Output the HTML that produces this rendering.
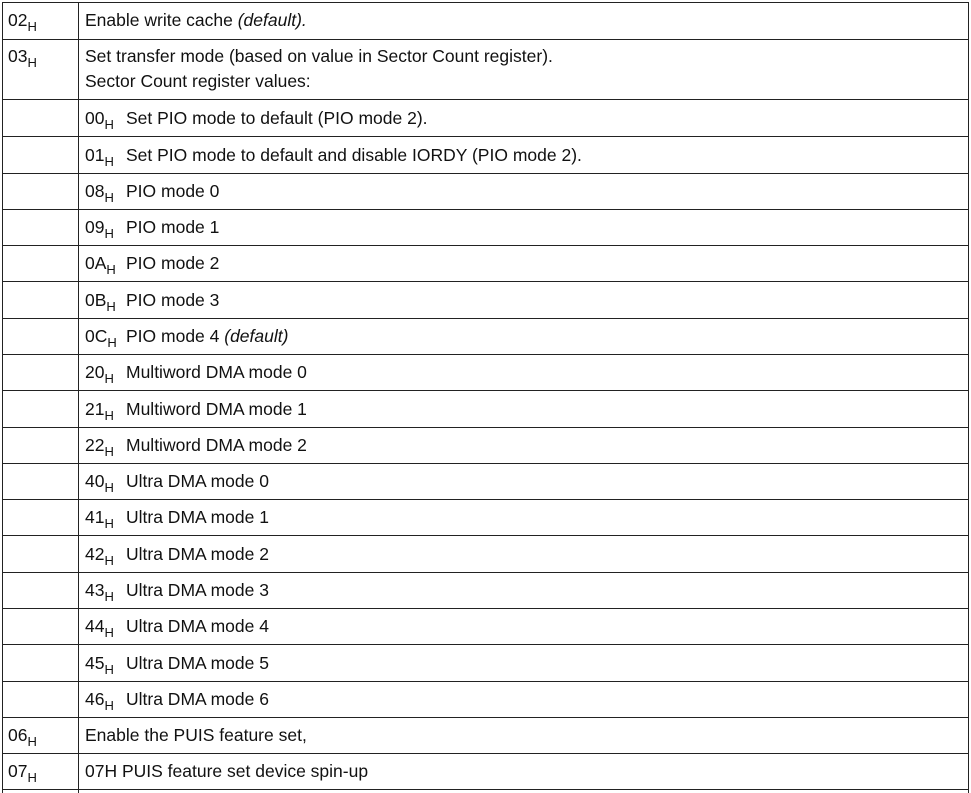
<!DOCTYPE html>
<html><head><style>
body{margin:0;width:971px;height:793px;background:#fff;position:relative;overflow:hidden;font-family:"Liberation Sans",sans-serif;font-size:17.5px;color:#111}
.h{position:absolute;left:2px;width:967px;height:1px;background:#222}
.v{position:absolute;top:2px;width:1px;height:791px;background:#222}
.t{position:absolute;white-space:nowrap;line-height:25px}
sub{font-size:13px;vertical-align:-5px;line-height:0}
.c{display:inline-block;width:41px}
</style></head><body>
<div class="v" style="left:2px"></div><div class="v" style="left:78px"></div><div class="v" style="left:968px"></div>
<div class="h" style="top:2px"></div><div class="h" style="top:39px"></div><div class="h" style="top:99px"></div><div class="h" style="top:136px"></div><div class="h" style="top:173px"></div><div class="h" style="top:209px"></div><div class="h" style="top:245px"></div><div class="h" style="top:281px"></div><div class="h" style="top:318px"></div><div class="h" style="top:354px"></div><div class="h" style="top:390px"></div><div class="h" style="top:427px"></div><div class="h" style="top:463px"></div><div class="h" style="top:499px"></div><div class="h" style="top:535px"></div><div class="h" style="top:572px"></div><div class="h" style="top:608px"></div><div class="h" style="top:644px"></div><div class="h" style="top:681px"></div><div class="h" style="top:717px"></div><div class="h" style="top:753px"></div><div class="h" style="top:789px"></div>
<div class="t" style="left:8px;top:8px">02<sub>H</sub></div><div class="t" style="left:85px;top:8px">Enable write cache <i>(default).</i></div>
<div class="t" style="left:8px;top:44px">03<sub>H</sub></div><div class="t" style="left:85px;top:44px">Set transfer mode (based on value in Sector Count register).<br>Sector Count register values:</div>
<div class="t" style="left:85px;top:106px"><span class="c">00<sub>H</sub></span>Set PIO mode to default (PIO mode 2).</div>
<div class="t" style="left:85px;top:143px"><span class="c">01<sub>H</sub></span>Set PIO mode to default and disable IORDY (PIO mode 2).</div>
<div class="t" style="left:85px;top:179px"><span class="c">08<sub>H</sub></span>PIO mode 0</div>
<div class="t" style="left:85px;top:215px"><span class="c">09<sub>H</sub></span>PIO mode 1</div>
<div class="t" style="left:85px;top:251px"><span class="c">0A<sub>H</sub></span>PIO mode 2</div>
<div class="t" style="left:85px;top:288px"><span class="c">0B<sub>H</sub></span>PIO mode 3</div>
<div class="t" style="left:85px;top:324px"><span class="c">0C<sub>H</sub></span>PIO mode 4 <i>(default)</i></div>
<div class="t" style="left:85px;top:360px"><span class="c">20<sub>H</sub></span>Multiword DMA mode 0</div>
<div class="t" style="left:85px;top:397px"><span class="c">21<sub>H</sub></span>Multiword DMA mode 1</div>
<div class="t" style="left:85px;top:433px"><span class="c">22<sub>H</sub></span>Multiword DMA mode 2</div>
<div class="t" style="left:85px;top:469px"><span class="c">40<sub>H</sub></span>Ultra DMA mode 0</div>
<div class="t" style="left:85px;top:505px"><span class="c">41<sub>H</sub></span>Ultra DMA mode 1</div>
<div class="t" style="left:85px;top:542px"><span class="c">42<sub>H</sub></span>Ultra DMA mode 2</div>
<div class="t" style="left:85px;top:578px"><span class="c">43<sub>H</sub></span>Ultra DMA mode 3</div>
<div class="t" style="left:85px;top:614px"><span class="c">44<sub>H</sub></span>Ultra DMA mode 4</div>
<div class="t" style="left:85px;top:651px"><span class="c">45<sub>H</sub></span>Ultra DMA mode 5</div>
<div class="t" style="left:85px;top:687px"><span class="c">46<sub>H</sub></span>Ultra DMA mode 6</div>
<div class="t" style="left:8px;top:723px">06<sub>H</sub></div><div class="t" style="left:85px;top:723px">Enable the PUIS feature set,</div>
<div class="t" style="left:8px;top:759px">07<sub>H</sub></div><div class="t" style="left:85px;top:759px">07H PUIS feature set device spin-up</div>
</body></html>
